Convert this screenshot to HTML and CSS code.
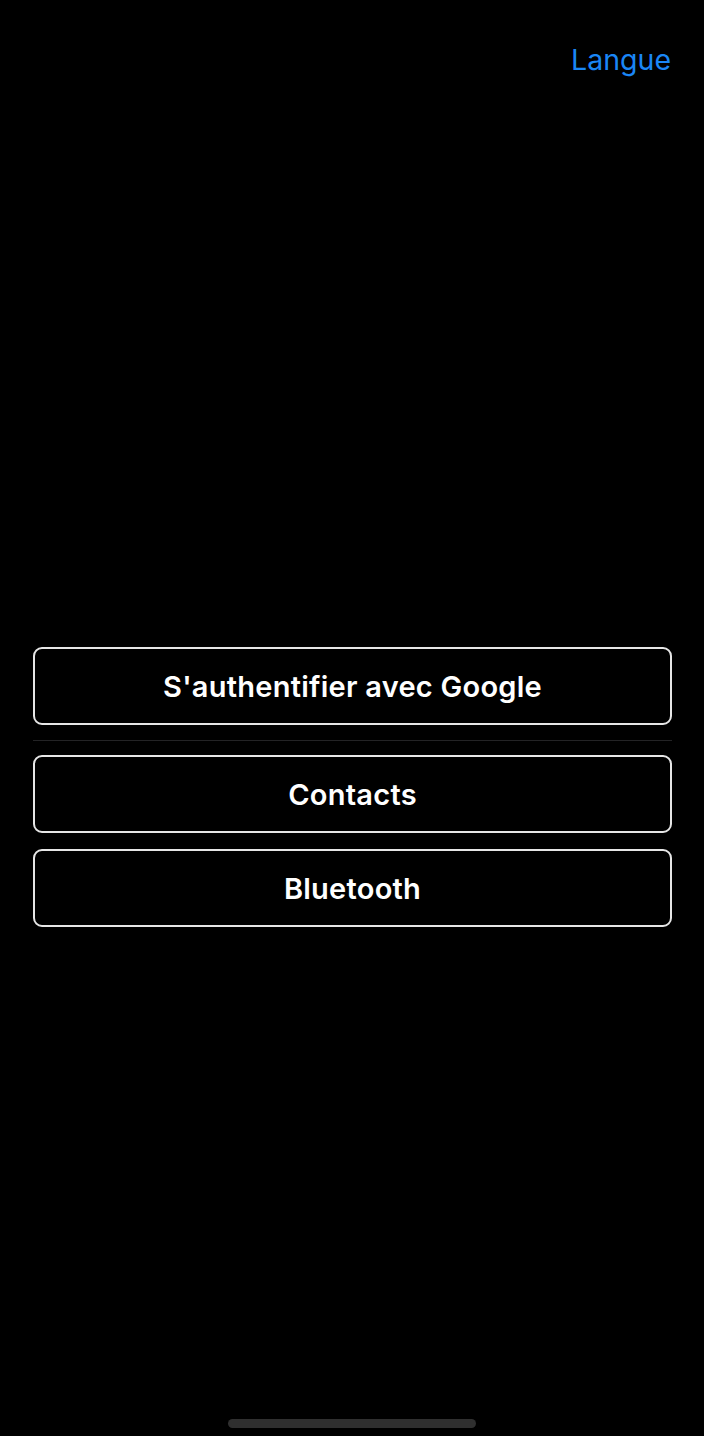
FILE: index.html
```html
<!DOCTYPE html>
<html lang="fr">
<head>
<meta charset="utf-8">
<link rel="stylesheet" href="styles.css">
</head>
<body>
<div class="screen">
  <header class="topbar">
    <span class="lang">Langue</span>
  </header>
  <main class="actions">
    <button class="btn">S'authentifier avec Google</button>
    <div class="sep"></div>
    <button class="btn">Contacts</button>
    <button class="btn">Bluetooth</button>
  </main>
  <div class="home-wrap"><div class="home"></div></div>
</div>
</body>
</html>
```
FILE: styles.css
```css
html, body {
  margin: 0;
  padding: 0;
  background: #000;
}
.screen {
  width: 704px;
  height: 1436px;
  display: flex;
  flex-direction: column;
  font-family: Inter, "Liberation Sans", sans-serif;
  color: #fff;
}
.topbar {
  display: flex;
  justify-content: flex-end;
  padding: 40px 33px 0 0;
  height: 40px;
}
.lang {
  color: #1a86f5;
  font-size: 28.5px;
  line-height: 40px;
  font-weight: 400;
}
.actions {
  margin-top: 567px;
  padding: 0 32px 0 33px;
  display: flex;
  flex-direction: column;
}
.btn {
  height: 78px;
  border: 2px solid #e6e6e6;
  border-radius: 9px;
  background: #000;
  color: #fff;
  font-family: Inter, "Liberation Sans", sans-serif;
  font-size: 29px;
  font-weight: 600;
  letter-spacing: 0.25px;
  padding: 0;
  margin: 0 0 16px 0;
}
.sep {
  height: 1px;
  background: #232325;
  margin: -1px 0 14px 0;
}
.home-wrap {
  margin-top: auto;
  display: flex;
  justify-content: center;
  padding-bottom: 8px;
}
.home {
  width: 248px;
  height: 9px;
  border-radius: 5px;
  background: #2f2f2f;
}
```
